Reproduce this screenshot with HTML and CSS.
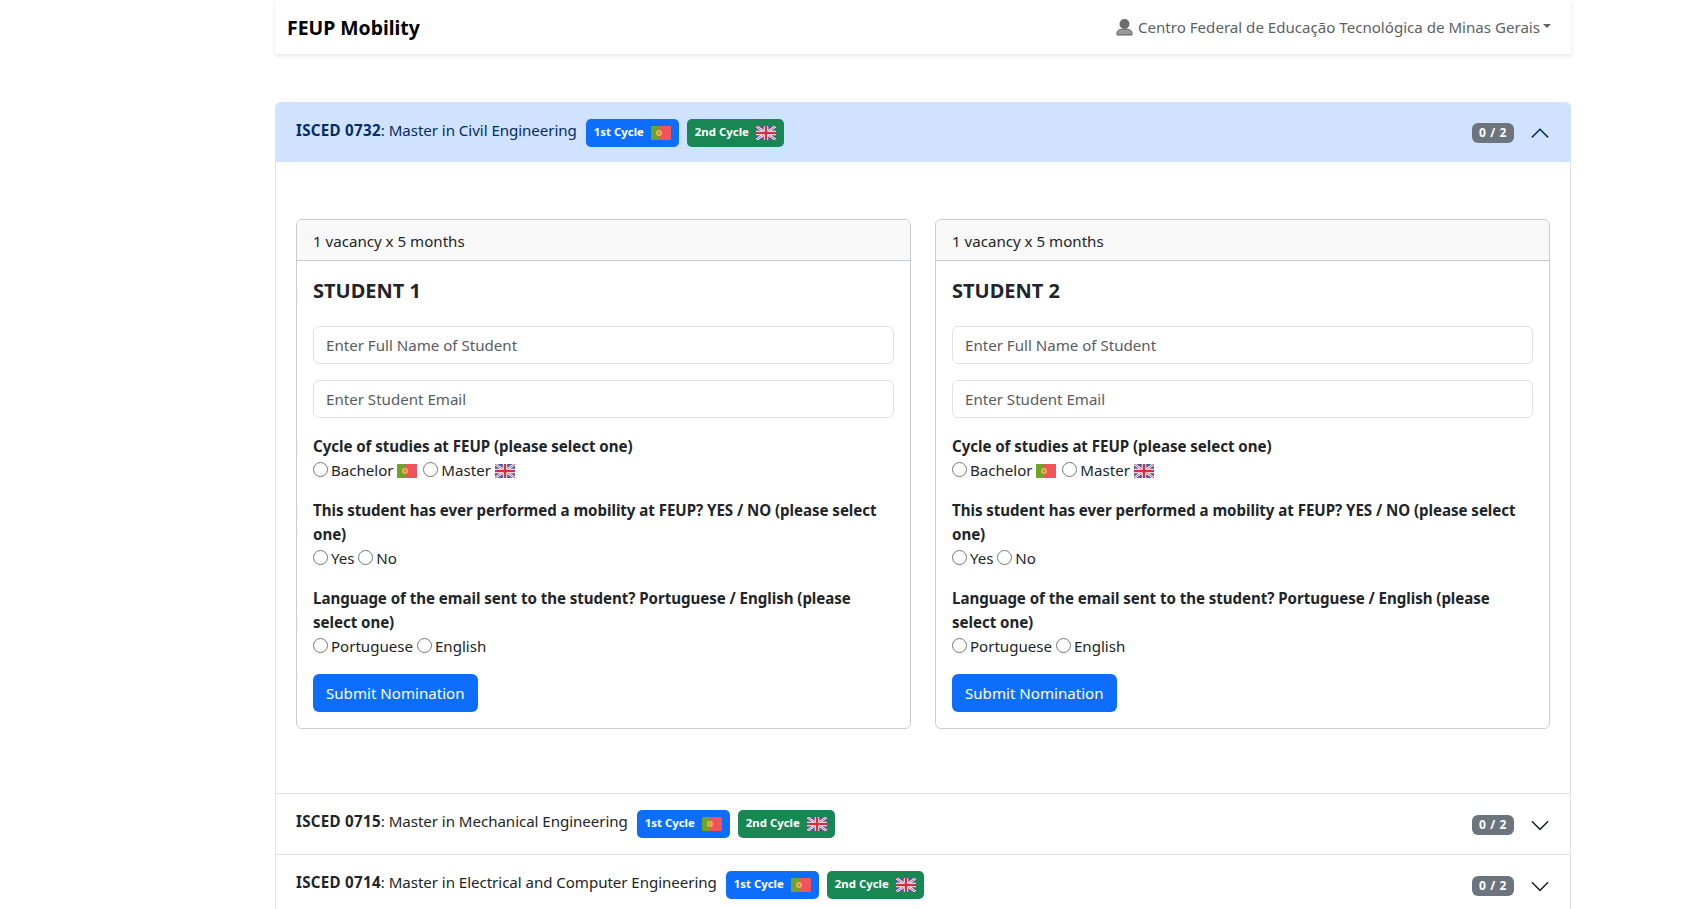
FILE: index.html
```html
<!DOCTYPE html>
<html lang="en">
<head>
  <meta charset="UTF-8">
  <title>FEUP Mobility</title>
  <link rel="stylesheet" href="styles.css">
</head>
<body>

  <svg class="defs" width="0" height="0">
    <symbol id="flag-pt" viewBox="0 0 20 14">
      <rect width="20" height="14" fill="#f0535c"/>
      <rect width="8" height="14" fill="#6fa32b"/>
      <circle cx="8" cy="7" r="3" fill="#e9b949"/>
      <circle cx="8" cy="7" r="1.4" fill="#e9795c"/>
    </symbol>
    <symbol id="flag-uk" viewBox="0 0 20 14">
      <rect width="20" height="14" fill="#3f5a9e"/>
      <path d="M0 0L20 14M20 0L0 14" stroke="#fff" stroke-width="2.6"/>
      <path d="M0 0L20 14M20 0L0 14" stroke="#d8475c" stroke-width="1"/>
      <path d="M10 0V14M0 7H20" stroke="#fff" stroke-width="4.4"/>
      <path d="M10 0V14M0 7H20" stroke="#d32f45" stroke-width="2.6"/>
    </symbol>
  </svg>

  <div class="wrapper">
    <nav class="navbar">
      <span class="brand">FEUP Mobility</span>
      <div class="user-menu">
        <svg class="user-icon" viewBox="0 0 17 18">
          <circle cx="8.5" cy="6" r="5" fill="#6c6c6c"/>
          <path d="M1 17v-2.4c0-2.2 3-3.6 7.5-3.6s7.5 1.4 7.5 3.6V17z" fill="#9a9a9a" stroke="#5e5e5e" stroke-width="1"/>
        </svg>
        <span>Centro Federal de Educação Tecnológica de Minas Gerais</span>
        <span class="caret"></span>
      </div>
    </nav>

    <div class="accordion">
      <div class="acc-item">
        <div class="acc-header open">
          <span class="acc-title"><b>ISCED 0732</b>: Master in Civil Engineering</span>
          <span class="tag blue"><span class="tag-text">1st Cycle</span> <svg class="flag"><use href="#flag-pt"/></svg></span>
          <span class="tag green"><span class="tag-text">2nd Cycle</span> <svg class="flag"><use href="#flag-uk"/></svg></span>
          <span class="count">0 / 2</span>
          <svg class="chevron" viewBox="0 0 16 16"><path d="M1.5 11.5L8 5l6.5 6.5" fill="none" stroke="#052c65" stroke-width="1.2"/></svg>
        </div>
        <div class="acc-body">
          <div class="card">
            <div class="card-header">1 vacancy x 5 months</div>
            <div class="card-body">
              <h5>STUDENT 1</h5>
              <div class="input">Enter Full Name of Student</div>
              <div class="input">Enter Student Email</div>
              <div class="question">
                <label>Cycle of studies at FEUP (please select one)</label>
                <div class="options">
                  <span class="radio"></span> Bachelor <svg class="flag"><use href="#flag-pt"/></svg>
                  <span class="radio"></span> Master <svg class="flag"><use href="#flag-uk"/></svg>
                </div>
              </div>
              <div class="question">
                <label>This student has ever performed a mobility at FEUP? YES / NO (please select one)</label>
                <div class="options"><span class="radio"></span> Yes <span class="radio"></span> No</div>
              </div>
              <div class="question">
                <label>Language of the email sent to the student? Portuguese / English (please select one)</label>
                <div class="options"><span class="radio"></span> Portuguese <span class="radio"></span> English</div>
              </div>
              <button class="btn">Submit Nomination</button>
            </div>
          </div>

          <div class="card">
            <div class="card-header">1 vacancy x 5 months</div>
            <div class="card-body">
              <h5>STUDENT 2</h5>
              <div class="input">Enter Full Name of Student</div>
              <div class="input">Enter Student Email</div>
              <div class="question">
                <label>Cycle of studies at FEUP (please select one)</label>
                <div class="options">
                  <span class="radio"></span> Bachelor <svg class="flag"><use href="#flag-pt"/></svg>
                  <span class="radio"></span> Master <svg class="flag"><use href="#flag-uk"/></svg>
                </div>
              </div>
              <div class="question">
                <label>This student has ever performed a mobility at FEUP? YES / NO (please select one)</label>
                <div class="options"><span class="radio"></span> Yes <span class="radio"></span> No</div>
              </div>
              <div class="question">
                <label>Language of the email sent to the student? Portuguese / English (please select one)</label>
                <div class="options"><span class="radio"></span> Portuguese <span class="radio"></span> English</div>
              </div>
              <button class="btn">Submit Nomination</button>
            </div>
          </div>
        </div>
      </div>

      <div class="acc-item">
        <div class="acc-header">
          <span class="acc-title"><b>ISCED 0715</b>: Master in Mechanical Engineering</span>
          <span class="tag blue"><span class="tag-text">1st Cycle</span> <svg class="flag"><use href="#flag-pt"/></svg></span>
          <span class="tag green"><span class="tag-text">2nd Cycle</span> <svg class="flag"><use href="#flag-uk"/></svg></span>
          <span class="count">0 / 2</span>
          <svg class="chevron" viewBox="0 0 16 16"><path d="M1.5 5L8 11.5 14.5 5" fill="none" stroke="#212529" stroke-width="1.2"/></svg>
        </div>
      </div>

      <div class="acc-item">
        <div class="acc-header">
          <span class="acc-title"><b>ISCED 0714</b>: Master in Electrical and Computer Engineering</span>
          <span class="tag blue"><span class="tag-text">1st Cycle</span> <svg class="flag"><use href="#flag-pt"/></svg></span>
          <span class="tag green"><span class="tag-text">2nd Cycle</span> <svg class="flag"><use href="#flag-uk"/></svg></span>
          <span class="count">0 / 2</span>
          <svg class="chevron" viewBox="0 0 16 16"><path d="M1.5 5L8 11.5 14.5 5" fill="none" stroke="#212529" stroke-width="1.2"/></svg>
        </div>
      </div>
    </div>
  </div>

</body>
</html>
```

FILE: styles.css
```css
html, body {
  height: 100%;
}

body {
  font-family: "Noto Sans", sans-serif;
  font-size: 15.1px;
  line-height: 24px;
  color: #212529;
  margin: 0;
  padding: 0;
  background-color: #fff;
  overflow: hidden;
}

.defs {
  position: absolute;
}

.wrapper {
  width: 1296px;
  margin-left: 275px;
}

.navbar {
  height: 54px;
  display: flex;
  justify-content: space-between;
  align-items: center;
  padding: 2px 20px 0 12px;
  box-shadow: 0 2px 4px rgba(0, 0, 0, 0.1);
  box-sizing: border-box;
}

.brand {
  font-size: 19.4px;
  font-weight: 700;
  color: #000;
}

.user-menu {
  display: flex;
  align-items: center;
  color: #5c6166;
  margin-top: -2px;
}

.user-icon {
  width: 17px;
  height: 18px;
  margin-right: 5px;
}

.caret {
  border-top: 4.8px solid #5c6166;
  border-left: 4.8px solid transparent;
  border-right: 4.8px solid transparent;
  margin-left: 3px;
  margin-bottom: 3px;
}

.accordion {
  margin-top: 48px;
  border: 1px solid #dee2e6;
  border-top: 0;
  border-radius: 6px 6px 0 0;
}

.acc-item + .acc-item {
  border-top: 1px solid #dee2e6;
}

.acc-header {
  height: 60px;
  display: flex;
  align-items: center;
  padding: 0 20px;
  box-sizing: border-box;
}

.acc-header.open {
  background-color: #cfe2ff;
  color: #052c65;
  border-radius: 6px 6px 0 0;
  margin: 0 -1px;
  padding: 0 21px;
}

.acc-title {
  margin-right: 9px;
  margin-top: -7px;
  letter-spacing: -0.05px;
}

.open .acc-title {
  margin-top: -5px;
}

.acc-title b {
  font-weight: 700;
  letter-spacing: 0.3px;
}

.tag {
  display: inline-flex;
  align-items: center;
  gap: 7px;
  height: 28px;
  padding: 0 8px;
  border-radius: 5px;
  color: #fff;
  font-size: 11.4px;
  font-weight: 700;
  margin-right: 8px;
  box-sizing: border-box;
}

.tag-text {
  margin-top: -2px;
}

.open .tag {
  margin-top: 2px;
}

.blue {
  background-color: #0d6efd;
}

.green {
  background-color: #198754;
}

.flag {
  width: 20px;
  height: 14px;
  vertical-align: -2px;
}

.count {
  margin-left: auto;
  background-color: #6c757d;
  color: #fff;
  font-size: 12px;
  font-weight: 700;
  letter-spacing: 0.6px;
  line-height: 20px;
  height: 20px;
  padding: 0 7px;
  border-radius: 6px;
  margin-top: 2px;
}

.chevron {
  width: 20px;
  height: 20px;
  margin-left: 16px;
  margin-top: 1px;
  margin-right: 0;
}

.acc-body {
  padding: 57px 20px 64px;
  display: grid;
  grid-template-columns: 615px 615px;
  column-gap: 24px;
}

.card {
  border: 1px solid #c9cccf;
  border-radius: 6px;
  overflow: hidden;
}

.card-header {
  height: 41px;
  line-height: 42px;
  padding: 0 16px;
  background-color: #f8f8f8;
  border-bottom: 1px solid #c9cccf;
  box-sizing: border-box;
}

.card-body {
  padding: 18px 16px 16px;
  box-sizing: border-box;
}

h5 {
  font-size: 20px;
  font-weight: 700;
  line-height: 24px;
  margin: 0 0 23px;
}

.input {
  height: 38px;
  line-height: 36px;
  padding: 0 12px;
  margin-bottom: 16px;
  border: 1px solid #dee2e6;
  border-radius: 6px;
  color: #595c5f;
  box-sizing: border-box;
}

.question {
  margin-bottom: 16px;
}

.question label {
  display: block;
  font-weight: 700;
  letter-spacing: -0.05px;
}

.options .flag {
  margin-right: 2px;
}

.radio {
  display: inline-block;
  width: 13px;
  height: 13px;
  margin-right: -1px;
  border: 1px solid #767676;
  border-radius: 50%;
  vertical-align: -1px;
}

.btn {
  display: block;
  height: 38px;
  background-color: #0d6efd;
  color: #fff;
  font-family: inherit;
  font-size: inherit;
  line-height: 24px;
  padding: 0 13px;
  border: none;
  border-radius: 6px;
  cursor: pointer;
}
```
